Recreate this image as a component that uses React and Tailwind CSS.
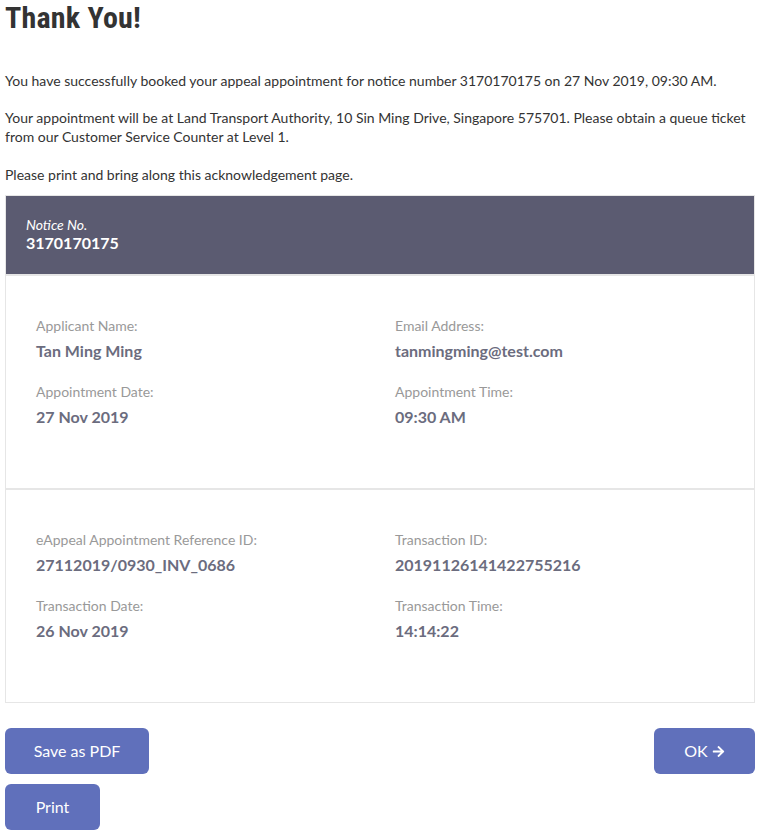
import { FaArrowRight } from "react-icons/fa";

const lato = { fontFamily: "Lato, 'Noto Sans', sans-serif" };

function Field({ label, value, first }) {
  return (
    <div className={first ? "" : "mt-[21px]"}>
      <div className="text-[14px] leading-5 text-[#999]">{label}</div>
      <div className="mt-[5px] text-[16px] font-bold leading-5 text-[#6b6c7e]">{value}</div>
    </div>
  );
}

function Section({ left, right, last }) {
  return (
    <div className={"grid grid-cols-2 gap-x-[30px] px-[30px] pt-[40px] pb-[61px] " + (last ? "" : "border-b-2 border-[#e6e6e6]")}>
      <div>
        <Field label={left[0][0]} value={left[0][1]} first />
        <Field label={left[1][0]} value={left[1][1]} />
      </div>
      <div>
        <Field label={right[0][0]} value={right[0][1]} first />
        <Field label={right[1][0]} value={right[1][1]} />
      </div>
    </div>
  );
}

export default function App() {
  return (
    <div className="min-h-screen bg-white px-[5px] text-[#333]" style={lato}>
      <h1
        className="text-[30px] font-bold leading-9 tracking-[0.2px] text-[#333]"
        style={{ fontFamily: "'Liberation Sans Narrow', 'Roboto Condensed', 'Liberation Sans', sans-serif" }}
      >
        Thank You!
      </h1>
      <div className="mt-[35px] text-[14px] leading-[19px]">
        <p>You have successfully booked your appeal appointment for notice number 3170170175 on 27 Nov 2019, 09:30 AM.</p>
        <p className="mt-[18px]">
          Your appointment will be at Land Transport Authority, 10 Sin Ming Drive, Singapore 575701. Please obtain a queue ticket
          from our Customer Service Counter at Level 1.
        </p>
        <p className="mt-[19px]">Please print and bring along this acknowledgement page.</p>
      </div>

      <div className="mt-[11px] border border-[#e6e6e6]">
        <div className="border-b-2 border-[#e6e6e6] bg-[#5b5b71] px-5 pt-[19px] pb-[23px] text-white">
          <div className="text-[14px] italic leading-[19px]">Notice No.</div>
          <div className="text-[16px] font-bold leading-[17px]">3170170175</div>
        </div>
        <Section
          left={[["Applicant Name:", "Tan Ming Ming"], ["Appointment Date:", "27 Nov 2019"]]}
          right={[["Email Address:", "tanmingming@test.com"], ["Appointment Time:", "09:30 AM"]]}
        />
        <Section
          last
          left={[["eAppeal Appointment Reference ID:", "27112019/0930_INV_0686"], ["Transaction Date:", "26 Nov 2019"]]}
          right={[["Transaction ID:", "20191126141422755216"], ["Transaction Time:", "14:14:22"]]}
        />
      </div>

      <div className="mt-[25px] flex items-start justify-between">
        <div className="flex flex-col items-start gap-[10px]">
          <button className="h-[46px] w-[144px] rounded-md bg-[#6070bb] text-[16px] text-white">Save as PDF</button>
          <button className="h-[46px] w-[95px] rounded-md bg-[#6070bb] text-[16px] text-white">Print</button>
        </div>
        <button className="flex h-[46px] w-[101px] items-center justify-center gap-1 rounded-md bg-[#6070bb] text-[16px] text-white">
          OK <FaArrowRight className="h-[13px] w-[13px]" />
        </button>
      </div>
    </div>
  );
}
